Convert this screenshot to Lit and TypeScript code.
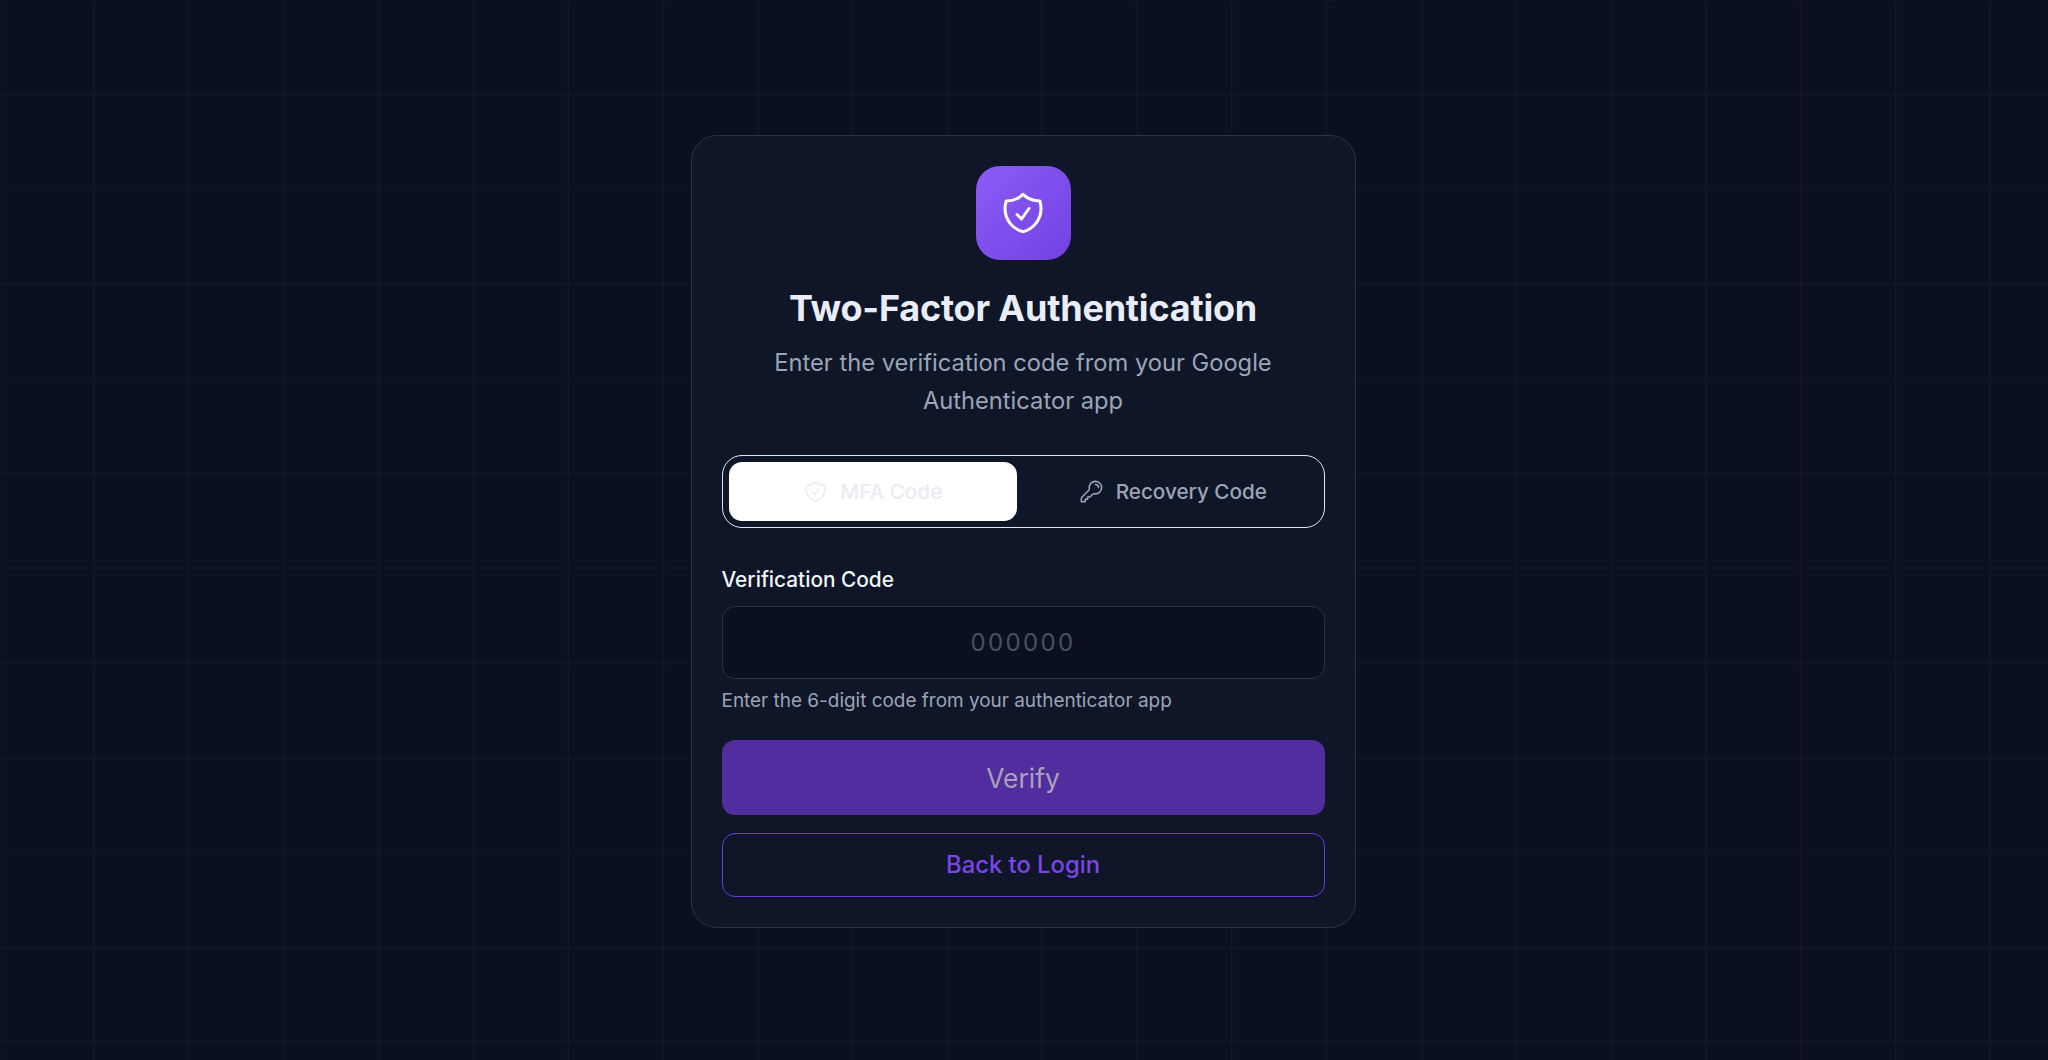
import { LitElement, html, css, svg } from "lit";
import { customElement } from "lit/decorators.js";

const shield = svg`<path d="M9 12.75 11.25 15 15 9.75m-3-7.036A11.959 11.959 0 0 1 3.598 6 11.99 11.99 0 0 0 3 9.749c0 5.592 3.824 10.29 9 11.623 5.176-1.332 9-6.03 9-11.622 0-1.31-.21-2.571-.598-3.751h-.152c-3.196 0-6.1-1.248-8.25-3.285Z"/>`;
const key = svg`<path d="M15.75 5.25a3 3 0 0 1 3 3m3 0a6 6 0 0 1-7.029 5.912c-.563-.097-1.159.026-1.563.43L10.5 17.25H8.25v2.25H6v2.25H2.25v-2.818c0-.597.237-1.17.659-1.591l6.499-6.499c.404-.404.527-1 .43-1.563A6 6 0 1 1 21.75 8.25Z"/>`;

@customElement("app-root")
export class AppRoot extends LitElement {
  static styles = css`
    :host {
      display: block;
      height: 1060px;
      font-family: Inter, "Liberation Sans", sans-serif;
      background-color: #0b1020;
      background-image:
        linear-gradient(rgba(255, 255, 255, 0.011) 3px, transparent 3px),
        linear-gradient(90deg, rgba(255, 255, 255, 0.017) 3px, transparent 3px);
      background-size: 94.8px 94.8px;
      background-position: -2px -2px;
    }
    .page {
      box-sizing: border-box;
      height: 100%;
      padding: 2px 2px 0 0;
      display: flex;
      align-items: center;
      justify-content: center;
    }
    .card {
      box-sizing: border-box;
      width: 665px;
      height: 793px;
      padding: 30px;
      background: #0e1627;
      border: 1px solid #2a3344;
      border-radius: 26px;
      display: flex;
      flex-direction: column;
      align-items: stretch;
    }
    .logo {
      align-self: center;
      width: 95px;
      height: 95px;
      border-radius: 24px;
      background: linear-gradient(135deg, #8b5cf6, #7341e3);
      display: flex;
      align-items: center;
      justify-content: center;
    }
    svg {
      fill: none;
      stroke: currentColor;
      stroke-linecap: round;
      stroke-linejoin: round;
      stroke-width: 1.5;
    }
    .logo svg {
      width: 48px;
      height: 48px;
      color: #fff;
    }
    h1 {
      margin: 25px 0 0;
      text-align: center;
      font-size: 36px;
      line-height: 46px;
      font-weight: 700;
      letter-spacing: -0.2px;
      color: #e9edf8;
    }
    .sub {
      margin: 13px auto 0;
      width: 540px;
      text-align: center;
      font-size: 23.7px;
      line-height: 38px;
      color: #9aa5b8;
    }
    .tabs {
      box-sizing: border-box;
      margin-top: 35px;
      height: 73px;
      padding: 6px;
      border: 1.5px solid #e2e8f0;
      border-radius: 20px;
      display: grid;
      grid-template-columns: 49fr 51fr;
    }
    .tab {
      display: flex;
      align-items: center;
      justify-content: center;
      gap: 12px;
      border-radius: 13px;
      font-size: 20.7px;
      font-weight: 500;
      color: #9aa5b8;
    }
    .tab.recovery {
      padding-left: 11px;
    }
    .tab svg {
      width: 25px;
      height: 25px;
    }
    .tab.active {
      background: #fff;
      color: #e9ecf3;
    }
    .label {
      margin-top: 38px;
      font-size: 20.8px;
      line-height: 28px;
      font-weight: 500;
      color: #f1f5f9;
    }
    .input {
      box-sizing: border-box;
      margin-top: 12px;
      height: 74px;
      border: 1px solid #2a3344;
      border-radius: 13px;
      background: #0b1020;
      display: flex;
      align-items: center;
      justify-content: center;
      font-size: 24px;
      letter-spacing: 2.4px;
      color: #475161;
    }
    .help {
      margin-top: 10px;
      font-size: 18.95px;
      line-height: 24px;
      color: #9aa5b8;
    }
    .verify,
    .back {
      box-sizing: border-box;
      display: flex;
      align-items: center;
      justify-content: center;
      border-radius: 13px;
    }
    .verify {
      margin-top: 27px;
      height: 75px;
      background: #512da0;
      font-size: 26.4px;
      font-weight: 400;
      color: #a9a3b8;
    }
    .back {
      margin-top: 18px;
      height: 64px;
      border: 1px solid #6d3bdc;
      font-size: 23.8px;
      font-weight: 500;
      color: #7c45e8;
    }
  `;

  render() {
    return html`<div class="page">
      <div class="card">
        <div class="logo"><svg viewBox="0 0 24 24">${shield}</svg></div>
        <h1>Two-Factor Authentication</h1>
        <p class="sub">Enter the verification code from your Google Authenticator app</p>
        <div class="tabs">
          <div class="tab active"><svg viewBox="0 0 24 24">${shield}</svg>MFA Code</div>
          <div class="tab recovery"><svg viewBox="0 0 24 24">${key}</svg>Recovery Code</div>
        </div>
        <div class="label">Verification Code</div>
        <div class="input">000000</div>
        <div class="help">Enter the 6-digit code from your authenticator app</div>
        <div class="verify">Verify</div>
        <div class="back">Back to Login</div>
      </div>
    </div>`;
  }
}
